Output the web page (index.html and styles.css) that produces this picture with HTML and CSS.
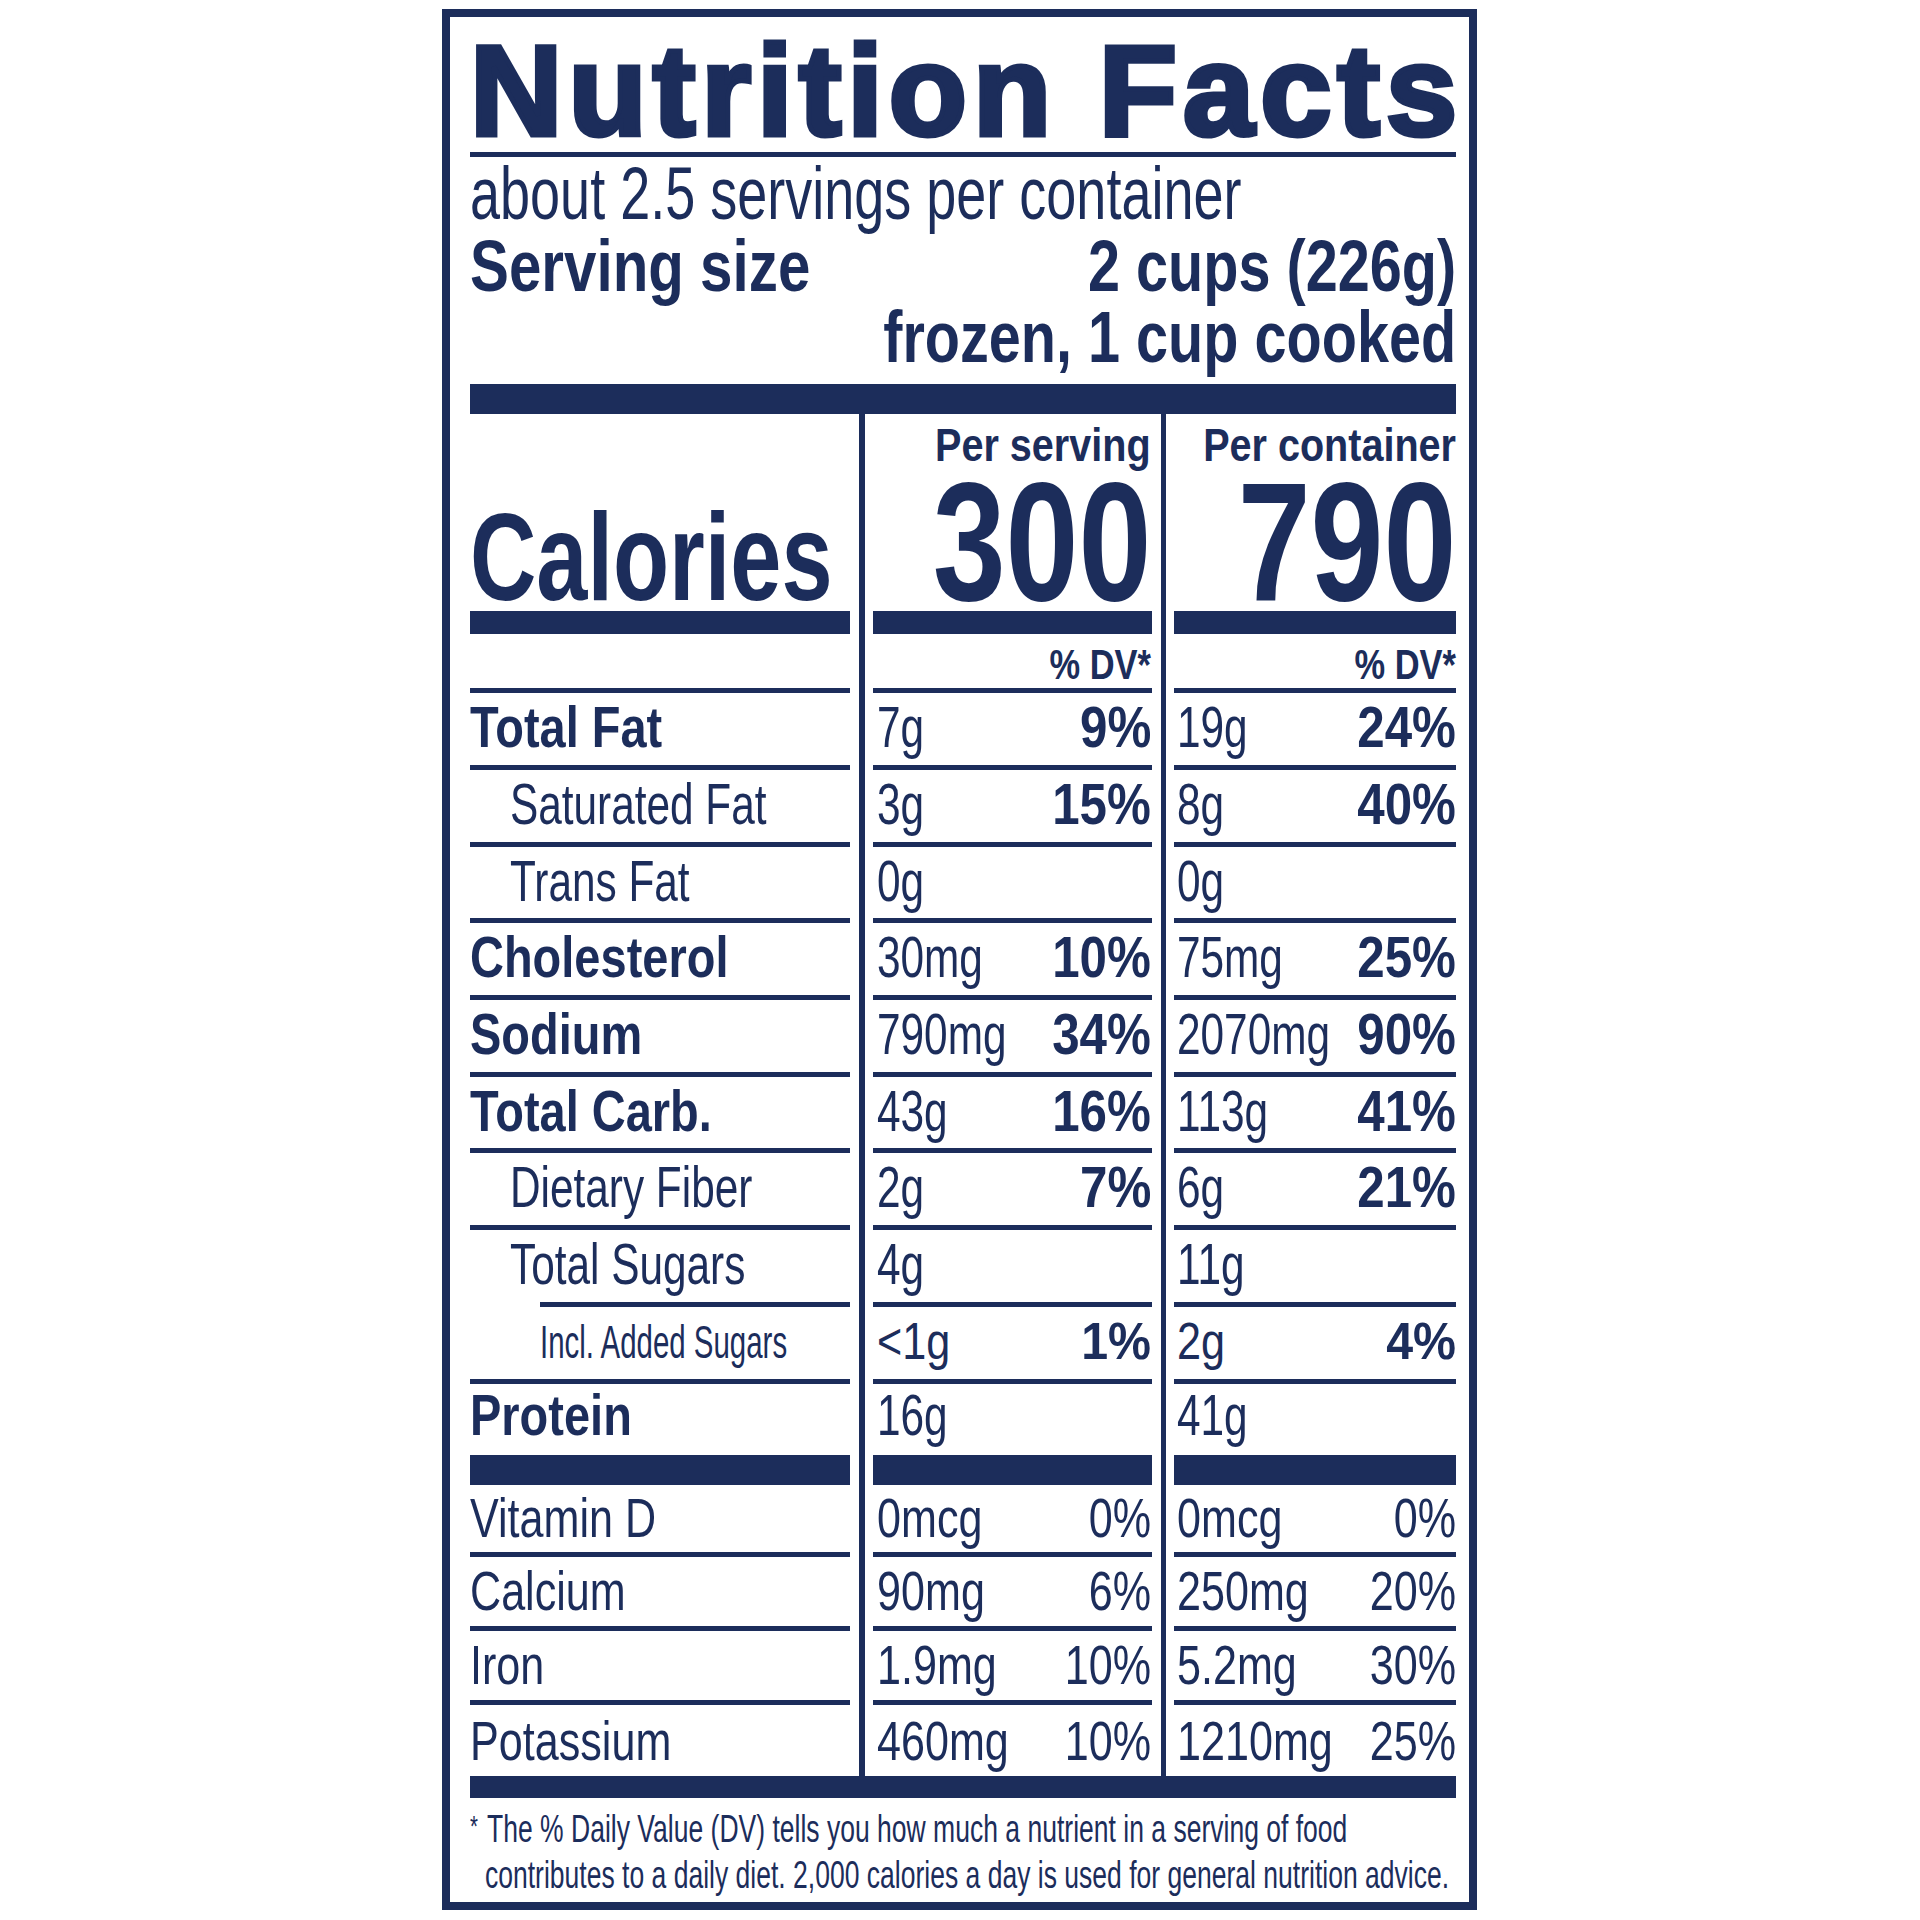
FILE: index.html
```html
<!DOCTYPE html>
<html>

<head>
    <meta charset="UTF-8">
    <title>Nutrition Facts</title>
    <meta name="viewport" content="width=device-width, initial-scale=1.0">
    <link rel="stylesheet" href="styles.css">
</head>

<body>
    <div class="label-box">
        <h1 class="title">Nutrition Facts</h1>
        <div class="rule"></div>
        <p class="servings"><span>about 2.5 servings per container</span></p>
        <div class="size-row">
            <span class="size-name">Serving size</span>
            <span class="size-amount">2 cups (226g)</span>
        </div>
        <div class="size-row right">
            <span class="size-note">frozen, 1 cup cooked</span>
        </div>
        <div class="bar"></div>

        <div class="facts">
            <div class="divider d1"></div>
            <div class="divider d2"></div>

            <!-- calories -->
            <div class="cell head c1"><span class="cal-label">Calories</span></div>
            <div class="cell head c2"><span class="per">Per serving</span><span class="kcal">300</span></div>
            <div class="cell head c3"><span class="per">Per container</span><span class="kcal">790</span></div>

            <div class="cell dv c1"></div>
            <div class="cell dv c2"><div class="fit"><b>% DV*</b></div></div>
            <div class="cell dv c3"><div class="fit"><b>% DV*</b></div></div>

            <!-- nutrients -->
            <div class="cell row c1 strong"><div class="fit">Total Fat</div></div>
            <div class="cell row c2"><div class="fit"><span>7g</span><b>9%</b></div></div>
            <div class="cell row c3"><div class="fit"><span>19g</span><b>24%</b></div></div>

            <div class="cell row c1 sub"><div class="fit">Saturated Fat</div></div>
            <div class="cell row c2"><div class="fit"><span>3g</span><b>15%</b></div></div>
            <div class="cell row c3"><div class="fit"><span>8g</span><b>40%</b></div></div>

            <div class="cell row c1 sub"><div class="fit">Trans Fat</div></div>
            <div class="cell row c2"><div class="fit"><span>0g</span></div></div>
            <div class="cell row c3"><div class="fit"><span>0g</span></div></div>

            <div class="cell row c1 strong"><div class="fit">Cholesterol</div></div>
            <div class="cell row c2"><div class="fit"><span>30mg</span><b>10%</b></div></div>
            <div class="cell row c3"><div class="fit"><span>75mg</span><b>25%</b></div></div>

            <div class="cell row c1 strong"><div class="fit">Sodium</div></div>
            <div class="cell row c2"><div class="fit"><span>790mg</span><b>34%</b></div></div>
            <div class="cell row c3"><div class="fit"><span>2070mg</span><b>90%</b></div></div>

            <div class="cell row c1 strong"><div class="fit">Total Carb.</div></div>
            <div class="cell row c2"><div class="fit"><span>43g</span><b>16%</b></div></div>
            <div class="cell row c3"><div class="fit"><span>113g</span><b>41%</b></div></div>

            <div class="cell row c1 sub"><div class="fit">Dietary Fiber</div></div>
            <div class="cell row c2"><div class="fit"><span>2g</span><b>7%</b></div></div>
            <div class="cell row c3"><div class="fit"><span>6g</span><b>21%</b></div></div>

            <div class="cell row c1 sub short-rule"><div class="fit">Total Sugars</div></div>
            <div class="cell row c2"><div class="fit"><span>4g</span></div></div>
            <div class="cell row c3"><div class="fit"><span>11g</span></div></div>

            <div class="cell row small c1 subsub"><div class="fit">Incl. Added Sugars</div></div>
            <div class="cell row small c2"><div class="fit"><span>&lt;1g</span><b>1%</b></div></div>
            <div class="cell row small c3"><div class="fit"><span>2g</span><b>4%</b></div></div>

            <div class="cell protein c1 strong"><div class="fit">Protein</div></div>
            <div class="cell protein c2"><div class="fit"><span>16g</span></div></div>
            <div class="cell protein c3"><div class="fit"><span>41g</span></div></div>

            <!-- vitamins and minerals -->
            <div class="cell mineral vit c1"><div class="fit">Vitamin D</div></div>
            <div class="cell mineral vit c2"><div class="fit"><span>0mcg</span><span>0%</span></div></div>
            <div class="cell mineral vit c3"><div class="fit"><span>0mcg</span><span>0%</span></div></div>

            <div class="cell mineral c1"><div class="fit">Calcium</div></div>
            <div class="cell mineral c2"><div class="fit"><span>90mg</span><span>6%</span></div></div>
            <div class="cell mineral c3"><div class="fit"><span>250mg</span><span>20%</span></div></div>

            <div class="cell mineral c1"><div class="fit">Iron</div></div>
            <div class="cell mineral c2"><div class="fit"><span>1.9mg</span><span>10%</span></div></div>
            <div class="cell mineral c3"><div class="fit"><span>5.2mg</span><span>30%</span></div></div>

            <div class="cell mineral last c1"><div class="fit">Potassium</div></div>
            <div class="cell mineral last c2"><div class="fit"><span>460mg</span><span>10%</span></div></div>
            <div class="cell mineral last c3"><div class="fit"><span>1210mg</span><span>25%</span></div></div>
        </div>

        <div class="foot-bar"></div>
        <p class="footnote">
            <span class="star">*</span>The % Daily Value (DV) tells you how much a nutrient in a serving of food<br>
            contributes to a daily diet. 2,000 calories a day is used for general nutrition advice.
        </p>
    </div>
</body>

</html>
```

FILE: styles.css
```css
/* no condensed face is installed, so the narrow type is squeezed with scaleX */

body {
    margin: 0;
    background: #ffffff;
    color: #1c2d5b;
    font-family: "Liberation Sans", Arial, sans-serif;
}

.label-box {
    box-sizing: border-box;
    width: 1035px;
    height: 1901px;
    margin: 9px 0 0 442px;
    padding: 0 13px 0 20px;
    border: 8px solid #1c2d5b;
}

.title {
    margin: 14px 0 0 0;
    font-size: 128px;
    line-height: 120px;
    font-weight: bold;
    letter-spacing: 6px;
    -webkit-text-stroke: 5px #1c2d5b;
    white-space: nowrap;
}

.rule {
    height: 5px;
    margin-top: 1px;
    background: #1c2d5b;
}

.servings {
    margin: 0;
    font-size: 75px;
    line-height: 72px;
    white-space: nowrap;
}

.servings span {
    display: inline-block;
    transform: scaleX(0.72);
    transform-origin: left center;
}

.size-row {
    display: flex;
    justify-content: space-between;
    margin-top: 2px;
    font-size: 72px;
    line-height: 71px;
    font-weight: bold;
    white-space: nowrap;
}

.size-row.right {
    justify-content: flex-end;
    margin-top: 0;
}

.size-name {
    transform: scaleX(0.81);
    transform-origin: left center;
}

.size-amount {
    transform: scaleX(0.8);
    transform-origin: right center;
}

.size-note {
    transform: scaleX(0.8);
    transform-origin: right center;
}

.bar {
    height: 30px;
    margin-top: 11px;
    background: #1c2d5b;
}

/* facts table */

.facts {
    display: grid;
    grid-template-columns: 380px 23px 279px 22px 282px;
    grid-template-rows: 220px 59px 77px 77px 76px 77px 77px 76px 77px 77px 77px 101px 72px 74px 74px 71px;
}

.divider {
    grid-row: 1 / -1;
    display: flex;
    justify-content: center;
}

.divider::before {
    content: "";
    width: 6px;
    background: #1c2d5b;
}

.divider.d1 {
    grid-column: 2;
}

.divider.d2 {
    grid-column: 4;
}

.divider.d2::before {
    width: 5px;
}

.cell {
    --k: 0.73;
    --kb: 1.164;
    box-sizing: border-box;
    border-bottom: 5px solid #1c2d5b;
    white-space: nowrap;
    font-size: 58px;
}

.fit {
    display: flex;
    justify-content: space-between;
    width: calc(100% / var(--k));
    transform: scaleX(var(--k));
    transform-origin: left top;
}

.fit b {
    display: inline-block;
    transform: scaleX(var(--kb));
    transform-origin: right center;
}

.c2 {
    padding: 0 1px 0 4px;
}

.c3 {
    padding: 0 0 0 3px;
}

.strong {
    --k: 0.81;
    font-weight: bold;
}

.head {
    display: flex;
    flex-direction: column;
    align-items: flex-end;
    justify-content: flex-end;
    border-bottom-width: 23px;
    font-weight: bold;
}

.head.c1 {
    align-items: flex-start;
}

.cal-label {
    font-size: 125px;
    line-height: 108px;
    transform: scaleX(0.735);
    transform-origin: left center;
}

.per {
    font-size: 46px;
    line-height: 46px;
    margin-bottom: 5px;
    transform: scaleX(0.86);
    transform-origin: right center;
}

.kcal {
    font-size: 168px;
    line-height: 138px;
    transform: scaleX(0.78);
    transform-origin: right center;
}

.dv {
    --k: 0.82;
    --kb: 1;
    font-size: 42px;
    line-height: 61px;
}

.dv .fit {
    justify-content: flex-end;
}

.row {
    line-height: 68px;
}

.sub {
    padding-left: 40px;
}

.short-rule {
    border-bottom: none;
    padding-bottom: 5px;
    background: linear-gradient(#1c2d5b, #1c2d5b) 70px 100% / calc(100% - 70px) 5px no-repeat;
}

.row.small {
    --k: 0.83;
    --kb: 1.12;
    font-size: 52px;
    line-height: 69px;
}

.subsub {
    padding-left: 70px;
}

.row.small.subsub {
    --k: 0.64;
    font-size: 46px;
    line-height: 70px;
}

.protein {
    line-height: 62px;
    border-bottom-width: 30px;
}

.mineral {
    --k: 0.77;
    font-size: 56px;
    line-height: 67px;
}

.mineral.vit {
    line-height: 65px;
}

.mineral.last {
    line-height: 71px;
    border-bottom: none;
}

/* footnote */

.foot-bar {
    height: 22px;
    background: #1c2d5b;
}

.footnote {
    margin: 8px 0 0 0;
    padding-left: 22px;
    text-indent: -22px;
    font-size: 39px;
    line-height: 46px;
    white-space: nowrap;
    transform: scaleX(0.68);
    transform-origin: left top;
}

.star {
    display: inline-block;
    width: 25px;
    text-indent: 0;
    font-size: 30px;
    line-height: 1;
    vertical-align: 6px;
}
```
